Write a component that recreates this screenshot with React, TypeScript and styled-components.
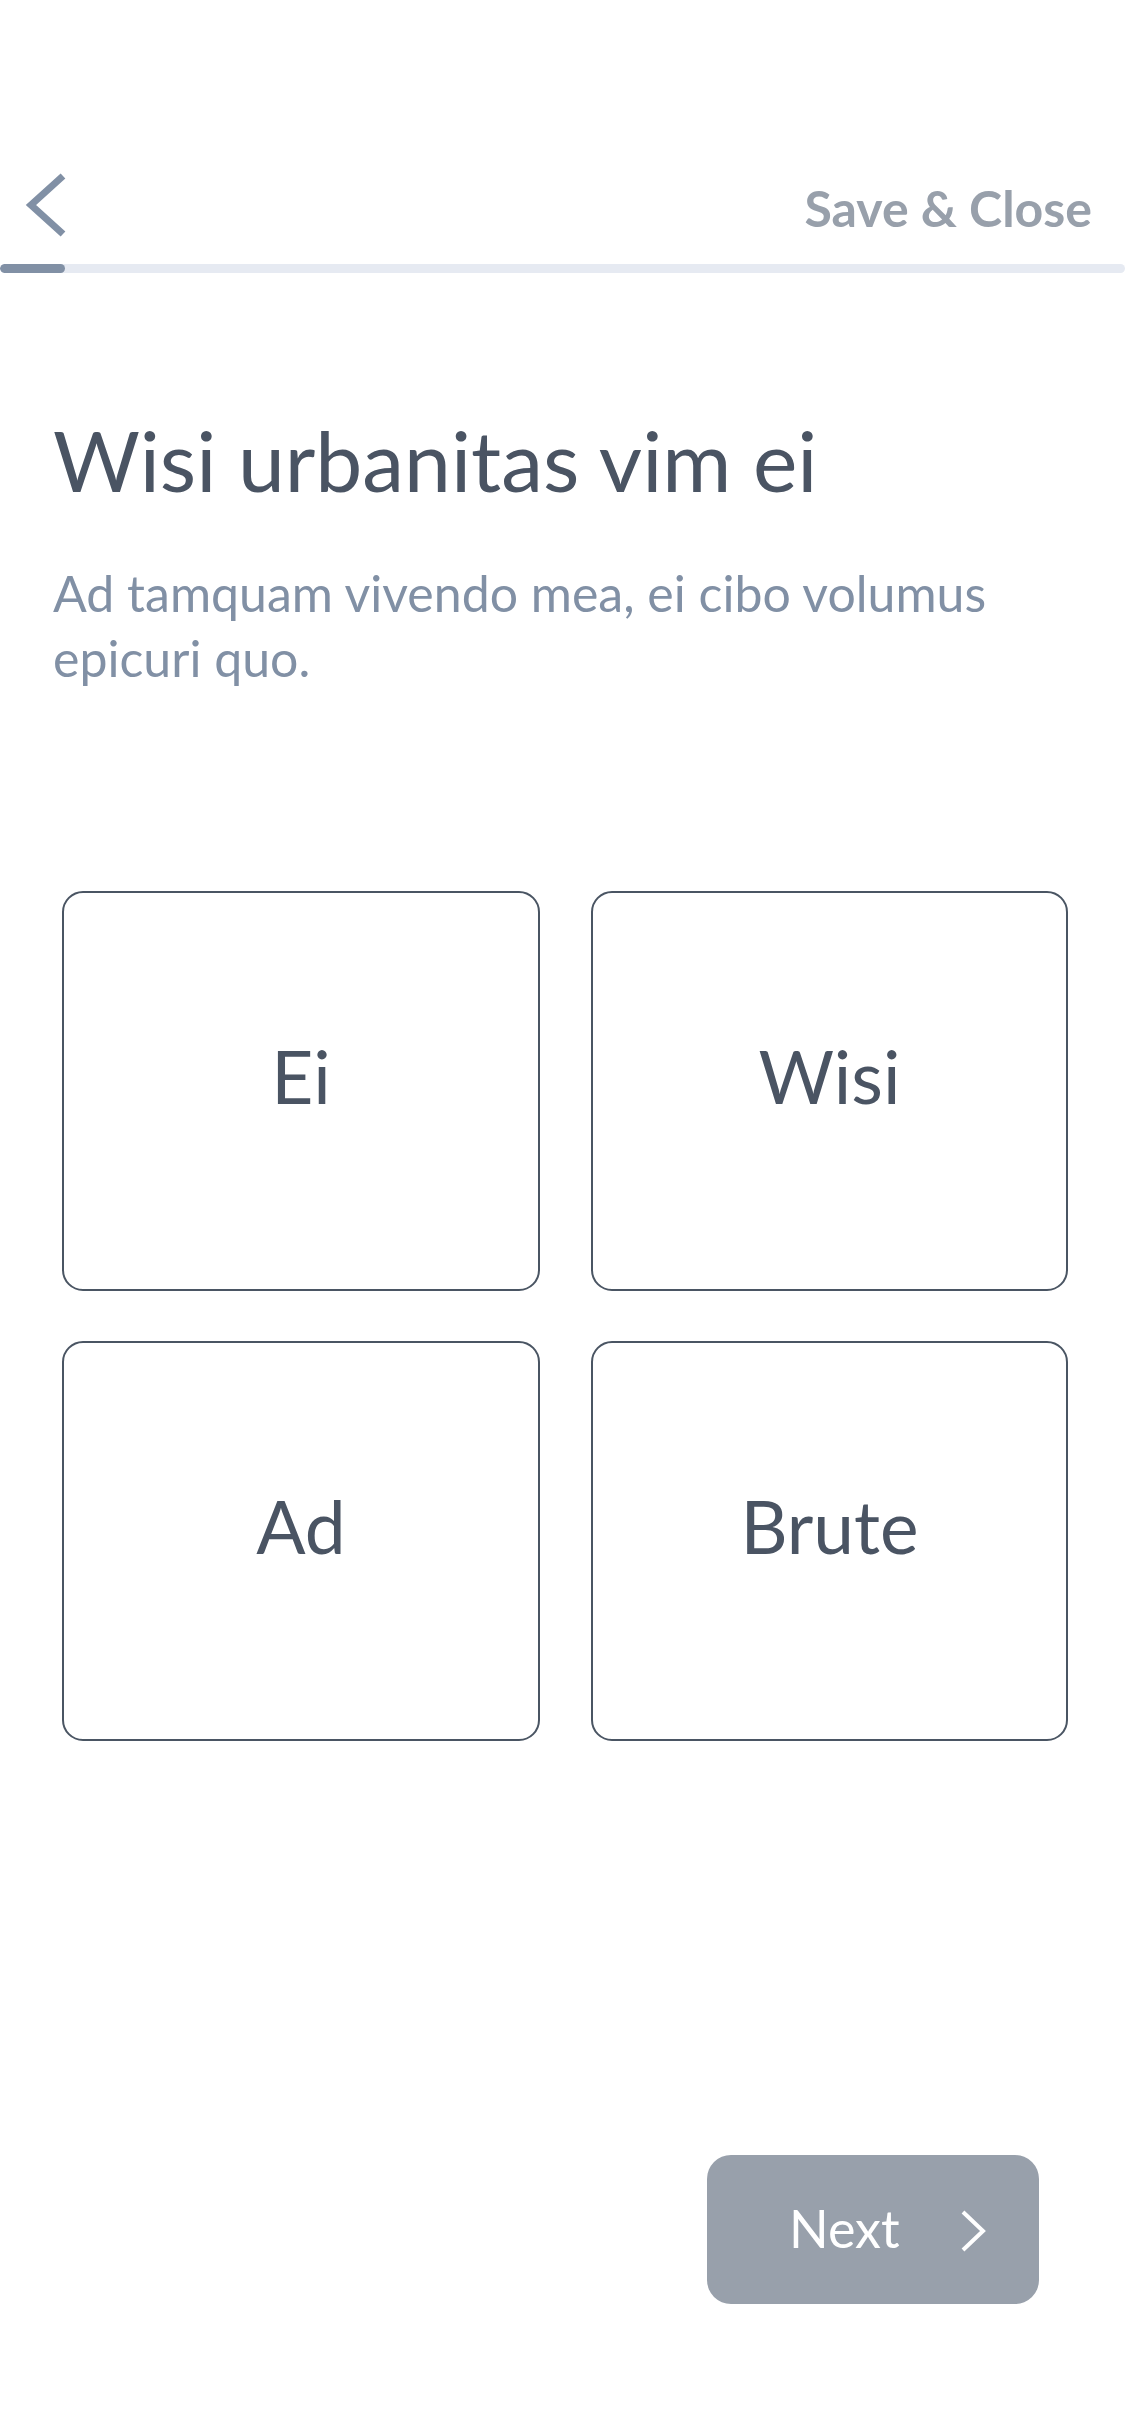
import React from "react";
import styled, { createGlobalStyle } from "styled-components";

const GlobalStyle = createGlobalStyle`
  html, body {
    margin: 0;
    padding: 0;
    background: #ffffff;
  }
  body {
    font-family: Lato, "Noto Sans", "Liberation Sans", sans-serif;
    -webkit-font-smoothing: antialiased;
  }
  * { box-sizing: border-box; }
`;

const Screen = styled.div`
  width: 1125px;
  min-height: 2436px;
  background: #ffffff;
  display: flex;
  flex-direction: column;
`;

const Header = styled.header`
  display: flex;
  align-items: center;
  justify-content: space-between;
  height: 114px;
  margin-top: 150px;
  padding: 0 33px 0 24px;
`;

const BackButton = styled.button`
  display: flex;
  align-items: center;
  justify-content: center;
  width: 44px;
  height: 70px;
  padding: 0;
  margin-top: -4px;
  border: none;
  background: transparent;
  cursor: pointer;
`;

const SaveClose = styled.button`
  border: none;
  background: transparent;
  padding: 0;
  margin-top: 2px;
  font-family: Lato, "Noto Sans", sans-serif;
  font-weight: 700;
  font-size: 50px;
  line-height: 1.2;
  color: #98a0ab;
  cursor: pointer;
`;

const ProgressTrack = styled.div`
  height: 9px;
  width: 100%;
  border-radius: 5px;
  background: #e6eaf2;
  overflow: hidden;
`;

const ProgressFill = styled.div`
  height: 100%;
  border-radius: 5px;
  background: #8190a5;
`;

const Content = styled.main`
  display: flex;
  flex-direction: column;
  padding: 137px 0 0 53px;
`;

const Title = styled.h1`
  margin: 0;
  font-family: Lato, "Noto Sans", sans-serif;
  font-weight: 400;
  font-size: 84px;
  line-height: 1.2;
  color: #4a5463;
`;

const Subtitle = styled.p`
  margin: 50px 0 0;
  max-width: 1020px;
  font-family: Lato, "Noto Sans", sans-serif;
  font-weight: 400;
  font-size: 50px;
  line-height: 65px;
  color: #8190a5;
`;

const OptionGrid = styled.div`
  display: grid;
  grid-template-columns: 478px 477px;
  grid-auto-rows: 400px;
  column-gap: 51px;
  row-gap: 50px;
  margin-top: 200px;
  padding-left: 62px;
`;

const OptionCard = styled.button<{ $selected?: boolean }>`
  display: flex;
  align-items: center;
  justify-content: center;
  padding: 0 0 28px;
  border: 2px solid #4a5563;
  border-radius: 21px;
  background: ${(p) => (p.$selected ? "#f2f4f8" : "#ffffff")};
  font-family: Lato, "Noto Sans", sans-serif;
  font-weight: 400;
  font-size: 73px;
  line-height: 1.2;
  color: #4a5463;
  cursor: pointer;
`;

const Footer = styled.footer`
  display: flex;
  justify-content: flex-end;
  margin-top: 414px;
  padding-right: 86px;
`;

const NextButton = styled.button`
  display: flex;
  align-items: center;
  width: 332px;
  height: 149px;
  padding: 0 0 0 82px;
  border: none;
  border-radius: 24px;
  background: #98a0ab;
  color: #ffffff;
  font-family: Lato, "Noto Sans", sans-serif;
  font-weight: 400;
  font-size: 52px;
  line-height: 1.2;
  cursor: pointer;
`;

const NextLabel = styled.span`
  margin-top: -2px;
`;

const NextIcon = styled.span`
  display: flex;
  margin-left: 59px;
  margin-top: 4px;
`;

const options = ["Ei", "Wisi", "Ad", "Brute"];

export default function App() {
  const progress = 65;
  return (
    <>
      <GlobalStyle />
      <Screen>
        <Header>
          <BackButton aria-label="Back">
            <svg width="44" height="70" viewBox="0 0 44 70">
              <polyline
                points="39,6 7,35 39,64"
                fill="none"
                stroke="#8190a5"
                strokeWidth="7"
                strokeLinecap="butt"
                strokeLinejoin="miter"
              />
            </svg>
          </BackButton>
          <SaveClose>Save &amp; Close</SaveClose>
        </Header>
        <ProgressTrack>
          <ProgressFill style={{ width: `${progress}px` }} />
        </ProgressTrack>
        <Content>
          <Title>Wisi urbanitas vim ei</Title>
          <Subtitle>Ad tamquam vivendo mea, ei cibo volumus epicuri quo.</Subtitle>
        </Content>
        <OptionGrid>
          {options.map((o) => (
            <OptionCard key={o}>{o}</OptionCard>
          ))}
        </OptionGrid>
        <Footer>
          <NextButton>
            <NextLabel>Next</NextLabel>
            <NextIcon>
              <svg width="28" height="44" viewBox="0 0 28 44">
                <polyline
                  points="4,3 24,22 4,41"
                  fill="none"
                  stroke="#ffffff"
                  strokeWidth="4"
                  strokeLinecap="butt"
                  strokeLinejoin="miter"
                />
              </svg>
            </NextIcon>
          </NextButton>
        </Footer>
      </Screen>
    </>
  );
}
